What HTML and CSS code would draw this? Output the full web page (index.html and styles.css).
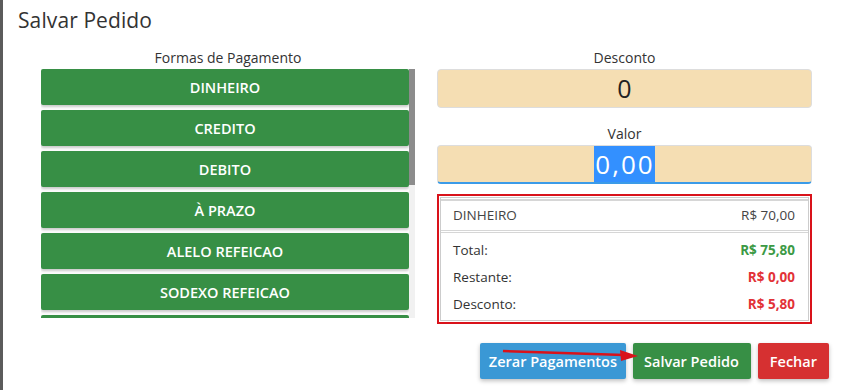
FILE: index.html
```html
<!DOCTYPE html>
<html lang="pt-BR">
<head>
  <meta charset="UTF-8" />
  <title>Salvar Pedido</title>
  <link rel="stylesheet" href="styles.css">
</head>
<body>
  <div class="backdrop"></div>
  <div class="modal">
    <div class="modal-header">Salvar Pedido</div>

    <div class="modal-body">
      <div class="col-left">
        <div class="label">Formas de Pagamento</div>
        <div class="pay-box">
          <div class="pay-list">
            <button class="pay-btn">DINHEIRO</button>
            <button class="pay-btn">CREDITO</button>
            <button class="pay-btn">DEBITO</button>
            <button class="pay-btn">À PRAZO</button>
            <button class="pay-btn">ALELO REFEICAO</button>
            <button class="pay-btn">SODEXO REFEICAO</button>
            <div class="pay-btn pay-more"></div>
          </div>
          <div class="scrollbar">
            <div class="thumb"></div>
          </div>
        </div>
      </div>

      <div class="col-right">
        <div class="label">Desconto</div>
        <div class="field">0</div>

        <div class="label label-valor">Valor</div>
        <div class="field field-focus"><span class="selected">0,00</span></div>

        <div class="summary">
          <div class="summary-inner">
            <div class="pay-row">
              <span>DINHEIRO</span>
              <span>R$ 70,00</span>
            </div>
            <div class="totals">
              <div class="total-row">
                <span>Total:</span>
                <span class="green">R$ 75,80</span>
              </div>
              <div class="total-row">
                <span>Restante:</span>
                <span class="red">R$ 0,00</span>
              </div>
              <div class="total-row">
                <span>Desconto:</span>
                <span class="red">R$ 5,80</span>
              </div>
            </div>
          </div>
        </div>
      </div>
    </div>

    <div class="modal-footer">
      <button class="btn btn-blue">Zerar Pagamentos</button>
      <button class="btn btn-green">Salvar Pedido</button>
      <button class="btn btn-red">Fechar</button>
    </div>
  </div>

  <!-- seta vermelha apontando pro botao salvar -->
  <svg class="arrow" width="847" height="390" viewBox="0 0 847 390">
    <line x1="503" y1="351" x2="624" y2="355" stroke="#d9121a" stroke-width="2.5" />
    <polygon points="638,356 620,350 621,361" fill="#d9121a" />
  </svg>
</body>
</html>
```

FILE: styles.css
```css
body {
  margin: 0;
  font-family: "Open Sans", "Liberation Sans", sans-serif;
  color: #333;
  background: #fff;
  display: flex;
  height: 390px;
  overflow: hidden;
}

.backdrop {
  width: 3px;
  background: #5b5b5b;
  flex-shrink: 0;
}

.modal {
  flex: 1;
  background: #fff;
}

.modal-header {
  padding: 7px 15px 0;
  font-size: 21px;
  line-height: 26px;
  color: #333;
  letter-spacing: 0.1px;
}

.modal-body {
  display: grid;
  grid-template-columns: 374px 375px;
  column-gap: 22px;
  padding: 15px 0 0 38px;
}

.label {
  text-align: center;
  font-size: 14px;
  line-height: 19px;
  margin-bottom: 2px;
  color: #333;
}

.pay-box {
  display: flex;
  height: 249px;
}

.pay-list {
  flex: 1;
  overflow: hidden;
  display: flex;
  flex-direction: column;
  gap: 5px;
}

.scrollbar {
  width: 6px;
  background: #f1f1f1;
}

.thumb {
  height: 116px;
  background: #8c8c8c;
}

.pay-btn {
  flex-shrink: 0;
  height: 36px;
  border: none;
  border-radius: 2px;
  background: #378f45;
  color: #fff;
  font-family: "Open Sans", sans-serif;
  font-weight: 600;
  font-size: 14.5px;
  box-shadow: 0 2px 3px rgba(0,0,0,0.22);
  cursor: pointer;
}

.field {
  height: 37px;
  background: #f5deb3;
  border: 1px solid #ddd;
  border-radius: 4px;
  text-align: center;
  font-size: 25px;
  line-height: 37px;
  color: #222;
}

.label-valor {
  margin-top: 16px;
}

.field-focus {
  height: 36px;
  line-height: 36px;
  border-bottom: 2px solid #3b9be8;
  font-size: 26px;
}

.selected {
  background: #3390ff;
  color: #fff;
  letter-spacing: 2px;
  padding: 0 0 0 1px;
}

.summary {
  margin-top: 10px;
  border: 2px solid #d9121a;
  padding: 1px;
}

.summary-inner {
  border: 1px solid #ccc;
  padding: 1px 0 2px;
}

.pay-row {
  display: flex;
  justify-content: space-between;
  height: 29px;
  line-height: 29px;
  padding: 0 13px 0 12px;
  font-size: 13.5px;
  color: #444;
  border-top: 2px solid #d6d6d6;
  border-bottom: 3px double #d6d6d6;
}

.totals {
  padding: 4px 13px 0 12px;
}

.total-row {
  display: flex;
  justify-content: space-between;
  height: 27px;
  line-height: 27px;
  font-size: 13.5px;
  color: #333;
}

.green {
  color: #3c9a45;
  font-weight: 700;
}

.red {
  color: #e23237;
  font-weight: 700;
}

.modal-footer {
  display: flex;
  justify-content: flex-end;
  gap: 7px;
  padding: 19px 18px 0 0;
}

.btn {
  height: 36px;
  border: none;
  border-radius: 2px;
  color: #fff;
  font-family: "Open Sans", sans-serif;
  font-size: 14.5px;
  font-weight: 600;
  padding: 0 12px;
  box-shadow: 0 2px 4px rgba(0,0,0,0.25);
  cursor: pointer;
}

.btn-blue {
  background: #3a98d5;
  padding: 0 9px;
}

.btn-green {
  background: #378f45;
  padding: 0 12px 0 11px;
}

.btn-red {
  background: #d63031;
}

.arrow {
  position: absolute;
  left: 0;
  top: 0;
  pointer-events: none;
}
```
